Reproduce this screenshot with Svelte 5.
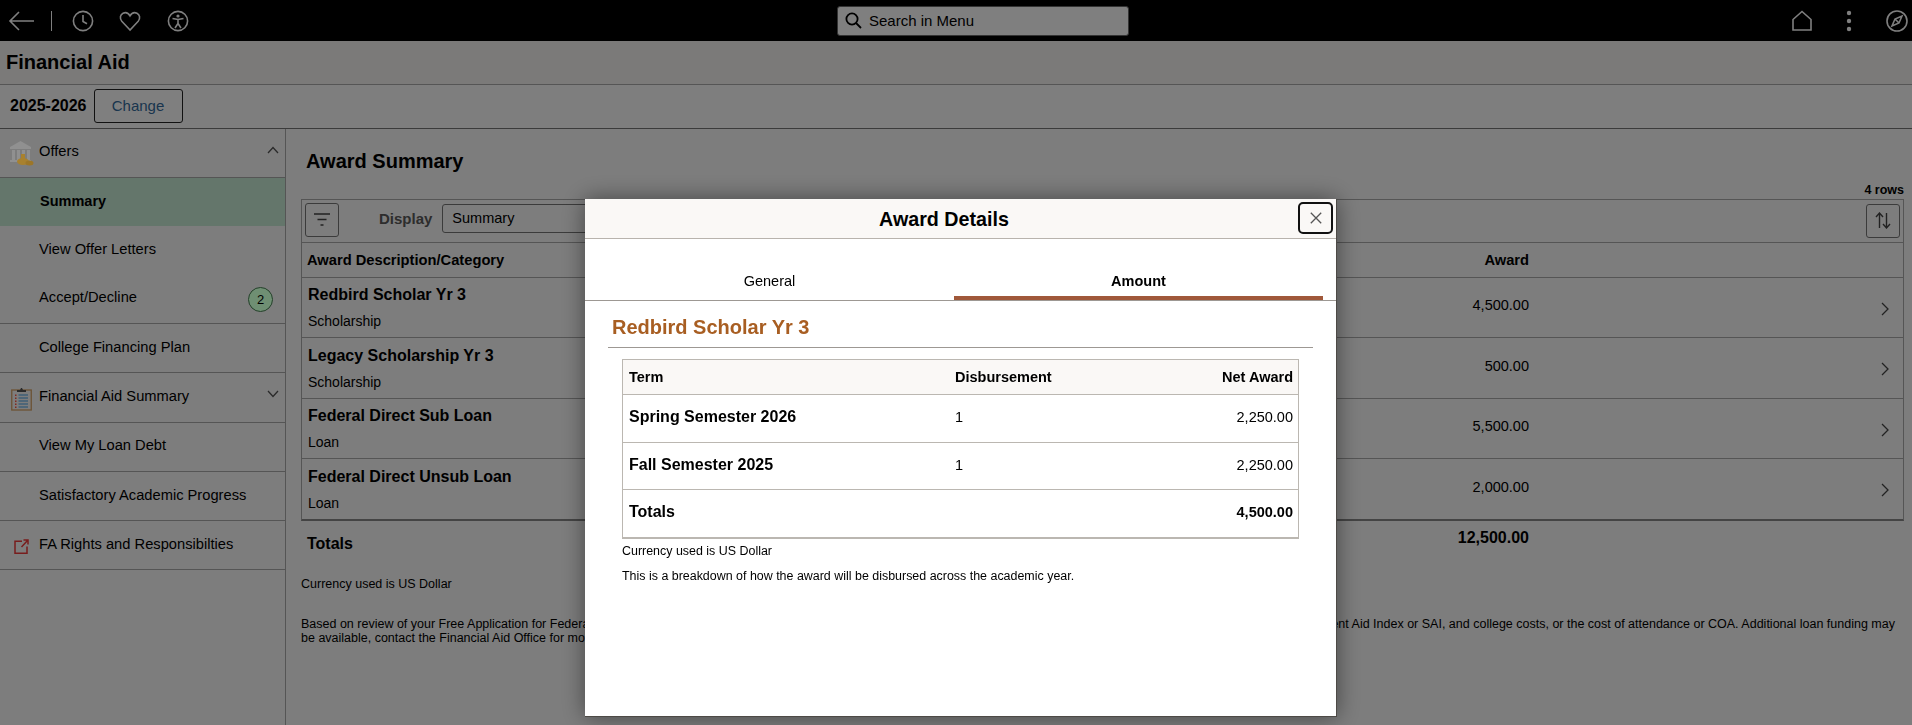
<script>
const navRows = [
  { label: 'Offers', icon: 'bank', chevron: 'up', h: 49, pb: 4, line: true },
  { label: 'Summary', active: true, h: 48, pb: 2, line: false },
  { label: 'View Offer Letters', h: 49, pb: 4, line: false },
  { label: 'Accept/Decline', badge: 2, h: 49, pb: 4, line: true },
  { label: 'College Financing Plan', h: 49, pb: 2, line: true },
  { label: 'Financial Aid Summary', icon: 'clipboard', chevron: 'down', h: 50, pb: 4, line: true },
  { label: 'View My Loan Debt', h: 49, pb: 4, line: true },
  { label: 'Satisfactory Academic Progress', h: 49, pb: 2, line: true },
  { label: 'FA Rights and Responsibilties', icon: 'external', h: 49, pb: 2, line: true }
]

const awards = [
  { name: 'Redbird Scholar Yr 3', category: 'Scholarship', amount: '4,500.00', h: 60 },
  { name: 'Legacy Scholarship Yr 3', category: 'Scholarship', amount: '500.00', h: 61 },
  { name: 'Federal Direct Sub Loan', category: 'Loan', amount: '5,500.00', h: 60 },
  { name: 'Federal Direct Unsub Loan', category: 'Loan', amount: '2,000.00', h: 60 }
]

const terms = [
  { term: 'Spring Semester 2026', disb: '1', net: '2,250.00', h: 48 },
  { term: 'Fall Semester 2025', disb: '1', net: '2,250.00', h: 47 }
]
</script>

<div class='page'>
  <header class='topbar'>
    <div class='top-left'>
      <svg class='back' width='27' height='22' viewBox='0 0 27 22'><path d='M26 11H2M11 2l-9 9 9 9' /></svg>
      <span class='sep'></span>
      <svg class='ti clock' width='22' height='22' viewBox='0 0 22 22'><circle cx='11' cy='11' r='9.6' /><path d='M11 5v6.5l4 2.2' /></svg>
      <svg class='ti heart' width='22' height='22' viewBox='0 0 22 22'><path d='M11 20 2.8 11.2C.4 8.4 1.2 4.6 4 3.2c2.6-1.2 5.4-.2 7 2.6 1.6-2.8 4.4-3.8 7-2.6 2.8 1.4 3.6 5.2 1.2 8z' /></svg>
      <svg class='ti access' width='22' height='22' viewBox='0 0 22 22'><circle cx='11' cy='11' r='9.6' /><circle class='dot' cx='11' cy='6' r='1.6' /><path d='M5.5 8.5 11 9.5l5.5-1M11 9.5v4M11 13.5 8 18M11 13.5 14 18' /></svg>
    </div>
    <div class='search'>
      <svg width='17' height='17' viewBox='0 0 17 17'><circle cx='7' cy='7' r='5.6' /><path d='m11 11 5 5' /></svg>
      <span>Search in Menu</span>
    </div>
    <div class='top-right'>
      <svg class='ti home' width='22' height='22' viewBox='0 0 22 22'><path d='M2 20V9.5L11 1.5l9 8V20z' /></svg>
      <svg class='dots' width='6' height='22' viewBox='0 0 6 22'><circle cx='3' cy='3' r='2.2' /><circle cx='3' cy='11' r='2.2' /><circle cx='3' cy='19' r='2.2' /></svg>
      <svg class='ti compass' width='22' height='22' viewBox='0 0 22 22'><circle cx='11' cy='11' r='10' /><path d='M16 6 13 13 6 16 9 9zM9 9l4 4' /></svg>
    </div>
  </header>

  <div class='titlebar'>Financial Aid</div>

  <div class='context'>
    <span class='year'>2025-2026</span>
    <button class='change'>Change</button>
  </div>

  <div class='content'>
    <aside class='side'>
      {#each navRows as row}
        <div class='nav' class:active={row.active} class:line={row.line} style='height:{row.h}px;padding-bottom:{row.pb}px'>
          {#if row.icon === 'bank'}
            <svg class='nav-icon bank' width='25' height='25' viewBox='0 0 25 25'>
              <path fill='#909090' d='M11.5 0 22 6v2H1V6z' />
              <path fill='#909090' d='M3 9h3v10H3zM8 9h3v10H8zM13 9h3v10h-3zM18 9h3v10h-3zM1 19h21v2H1z' />
              <ellipse cx='14' cy='20.5' rx='6' ry='3.5' fill='#a8812e' />
              <ellipse cx='20.5' cy='22' rx='4' ry='2.5' fill='#9c7628' />
              <rect x='12' y='13' width='4' height='5' fill='#a8812e' />
            </svg>
          {:else if row.icon === 'clipboard'}
            <svg class='nav-icon clip' width='21' height='24' viewBox='0 0 21 24'>
              <rect x='.75' y='3' width='19.5' height='20' fill='none' stroke='#d8a468' stroke-width='1.3' />
              <path fill='#555' d='M6 5V3h3l1-2h1l1 2h3v2z' />
              <path stroke='#3f9fe8' stroke-width='1.2' d='M7.5 8H17M7.5 11H17M7.5 14H17M7.5 17H17M7.5 20H17' />
              <path fill='#ff5440' d='M4 7.5h1.5V9H4zM4 10.5h1.5V12H4zM4 13.5h1.5V15H4zM4 16.5h1.5V18H4zM4 19.5h1.5V21H4z' />
            </svg>
          {:else if row.icon === 'external'}
            <svg class='nav-icon ext' width='15' height='15' viewBox='0 0 15 15'>
              <path d='M8 2.2H1v12h12V7.5M7.5 8 13.5 1.5M9.5 1H14v4.5' />
            </svg>
          {/if}
          <span>{row.label}</span>
          {#if row.chevron}
            <svg class='nav-chev' width='12' height='8' viewBox='0 0 12 8'>
              <path d={row.chevron === 'up' ? 'M1 7l5-5.5L11 7' : 'M1 1l5 5.5L11 1'} />
            </svg>
          {/if}
          {#if row.badge}
            <b class='badge'>{row.badge}</b>
          {/if}
        </div>
      {/each}
    </aside>

    <main class='main'>
      <h1>Award Summary</h1>
      <div class='rowcount'>4 rows</div>
      <div class='grid'>
        <div class='toolbar'>
          <button class='tool'>
            <svg width='16' height='14' viewBox='0 0 16 14'><path d='M0 1h16M3.5 6.5h9M6.5 12h3' /></svg>
          </button>
          <span class='display'>Display</span>
          <div class='select'>Summary</div>
          <button class='tool sort'>
            <svg width='16' height='17' viewBox='0 0 16 17'><path d='M4.5 16V1.5M1 5l3.5-4L8 5M11.5 1v14.5M8 12l3.5 4 3.5-4' /></svg>
          </button>
        </div>
        <div class='ghead'>
          <span>Award Description/Category</span>
          <span class='amt'>Award</span>
        </div>
        {#each awards as a}
          <div class='award' style='height:{a.h}px'>
            <div class='award-name'>
              <strong>{a.name}</strong>
              <small>{a.category}</small>
            </div>
            <span class='amt'>{a.amount}</span>
            <svg class='row-chev' width='8' height='14' viewBox='0 0 8 14'><path d='M1 1l6 6-6 6' /></svg>
          </div>
        {/each}
      </div>
      <div class='totals'>
        <strong>Totals</strong>
        <strong class='amt'>12,500.00</strong>
      </div>
      <p class='note currency'>Currency used is US Dollar</p>
      <p class='note'>Based on review of your Free Application for Federal Student Aid or FAFSA, your award total is based on your enrollment status, your full cost of education, your housing status, your Student Aid Index or SAI, and college costs, or the cost of attendance or COA. Additional loan funding may<br />be available, contact the Financial Aid Office for more information.</p>
    </main>
  </div>

  <div class='scrim'></div>

  <section class='modal'>
    <div class='modal-head'>
      <h2>Award Details</h2>
      <button class='close' aria-label='Close'>
        <svg width='12' height='12' viewBox='0 0 12 12'><path d='M.8.8l10.4 10.4M11.2.8.8 11.2' /></svg>
      </button>
    </div>
    <div class='tabs'>
      <div class='tab'>General</div>
      <div class='tab on'>Amount</div>
    </div>
    <h3>Redbird Scholar Yr 3</h3>
    <div class='terms'>
      <div class='trow thead'>
        <span>Term</span>
        <span>Disbursement</span>
        <span class='net'>Net Award</span>
      </div>
      {#each terms as t}
        <div class='trow' style='height:{t.h}px'>
          <strong>{t.term}</strong>
          <span>{t.disb}</span>
          <span class='net'>{t.net}</span>
        </div>
      {/each}
      <div class='trow last'>
        <strong>Totals</strong>
        <span></span>
        <strong class='net small'>4,500.00</strong>
      </div>
    </div>
    <p class='mnote'>Currency used is US Dollar</p>
    <p class='mnote'>This is a breakdown of how the award will be disbursed across the academic year.</p>
  </section>
</div>

<style>
  :global(body) {
    margin: 0;
    background: #fbfbfb;
    overflow: hidden;
  }
  .page {
    width: 1912px;
    height: 725px;
    overflow: hidden;
    font-family: 'Liberation Sans', Arial, sans-serif;
    color: #000;
    font-size: 14.5px;
  }
  button {
    font: inherit;
    background: none;
    padding: 0;
  }
  svg {
    flex: none;
  }

  /* top bar */
  .topbar {
    height: 41px;
    background: #000;
    display: grid;
    grid-template-columns: 837px 292px 1fr;
    align-items: center;
    box-sizing: border-box;
    padding-right: 4px;
  }
  .top-left, .top-right {
    display: flex;
    align-items: center;
  }
  .top-right {
    justify-content: flex-end;
  }
  .topbar svg path, .topbar svg circle {
    fill: none;
    stroke: #fff;
    stroke-width: 1.6;
  }
  .topbar .dots circle, .topbar .dot {
    fill: #fff;
    stroke: none;
  }
  .back { margin-left: 8px; }
  .sep {
    width: 1px;
    height: 20px;
    background: #fff;
    margin: 0 20px 0 16px;
  }
  .heart { margin-left: 25px; }
  .access { margin-left: 26px; }
  .dots { margin-left: 33px; }
  .compass { margin-left: 34px; }
  .search {
    height: 30px;
    background: #fff;
    border: 1px solid #666;
    border-radius: 3px;
    box-sizing: border-box;
    display: flex;
    align-items: center;
    gap: 7px;
    padding-left: 7px;
    font-size: 15px;
  }
  .topbar .search path, .topbar .search circle {
    stroke: #000;
    stroke-width: 1.8;
  }

  /* page heads */
  .titlebar {
    height: 33px;
    background: #f6f5f2;
    border-bottom: 1px solid #aaa;
    font-size: 20px;
    font-weight: 700;
    padding: 10px 0 0 6px;
  }
  .context {
    height: 41px;
    border-bottom: 1px solid #777;
    display: flex;
    align-items: center;
    gap: 7px;
    padding: 0 0 2px 10px;
    background: #fdfdfd;
  }
  .year {
    font-size: 16px;
    font-weight: 700;
  }
  .change {
    width: 89px;
    height: 34px;
    border: 1px solid #222;
    border-radius: 3px;
    color: #346b9c;
    font-size: 15px;
    background: #fff;
  }

  .content {
    display: flex;
    height: 596px;
  }

  /* left nav */
  .side {
    width: 285px;
    border-right: 1px solid #aaa;
    flex: none;
    font-size: 14.7px;
  }
  .nav {
    display: flex;
    align-items: center;
    box-sizing: border-box;
    padding-left: 39px;
    position: relative;
  }
  .nav.line {
    border-bottom: 1px solid #aaa;
  }
  .nav.active {
    background: #c9ecd6;
    font-weight: 700;
    font-size: 14.5px;
    padding-left: 40px;
  }
  .nav-icon {
    position: absolute;
  }
  .bank {
    left: 9px;
    top: 12px;
    z-index: 4;
  }
  .clip {
    left: 11px;
    top: 14px;
  }
  .ext {
    left: 14px;
    top: 18px;
  }
  .ext path {
    fill: none;
    stroke: #f03a3a;
    stroke-width: 1.5;
  }
  .nav-chev {
    position: absolute;
    right: 6px;
    top: 17px;
  }
  .nav-chev path {
    fill: none;
    stroke: #555;
    stroke-width: 1.3;
  }
  .badge {
    position: absolute;
    left: 248px;
    top: 12px;
    width: 25px;
    height: 25px;
    box-sizing: border-box;
    border-radius: 50%;
    background: #6f8f73;
    border: 1px solid #24402a;
    z-index: 4;
    display: flex;
    align-items: center;
    justify-content: center;
    font-size: 13px;
    font-weight: 400;
  }

  /* award list */
  .main {
    flex: 1;
    min-width: 0;
    padding: 0 8px 0 15px;
  }
  h1 {
    font-size: 20px;
    margin: 0;
    padding: 21px 0 0 5px;
    line-height: 23px;
  }
  .rowcount {
    text-align: right;
    font-size: 12.5px;
    font-weight: 700;
    line-height: 14px;
    margin-top: 10px;
  }
  .grid {
    border: 1px solid #aaa;
    border-bottom-width: 2px;
    margin-top: 2px;
    border-bottom-color: #888;
  }
  .toolbar {
    height: 43px;
    display: flex;
    align-items: center;
    border-bottom: 1px solid #aaa;
    padding: 0 3px 3px;
    box-sizing: border-box;
  }
  .tool {
    width: 34px;
    height: 34px;
    border: 1px solid #777;
    border-radius: 3px;
    display: flex;
    align-items: center;
    justify-content: center;
  }
  .tool path {
    fill: none;
    stroke: #444;
    stroke-width: 1.4;
  }
  .display {
    font-weight: 700;
    font-size: 15px;
    color: #5a5a5a;
    margin: 0 0 3px 40px;
  }
  .select {
    width: 400px;
    height: 29px;
    border: 1px solid #777;
    border-radius: 3px;
    margin: 0 0 3px 10px;
    display: flex;
    align-items: center;
    padding-left: 9px;
    box-sizing: border-box;
  }
  .sort {
    margin: 0 0 -2px auto;
  }
  .ghead {
    height: 35px;
    border-bottom: 1px solid #aaa;
    font-weight: 700;
    font-size: 14.7px;
    box-sizing: border-box;
    display: flex;
    align-items: center;
    justify-content: space-between;
    padding: 0 374px 0 5px;
  }
  .award {
    border-bottom: 1px solid #aaa;
    display: flex;
    align-items: center;
    box-sizing: border-box;
    padding: 0 14px 0 6px;
    position: relative;
  }
  .award:last-child {
    border-bottom: none;
  }
  .award-name {
    flex: 1;
    display: flex;
    flex-direction: column;
    gap: 9px;
  }
  .award-name strong {
    font-size: 16px;
    line-height: 18px;
  }
  .award-name small {
    font-size: 14px;
    line-height: 16px;
  }
  .amt {
    display: block;
  }
  .award .amt {
    margin: 0 352px 5px 0;
  }
  .row-chev {
    margin-top: 2px;
  }
  .row-chev path {
    fill: none;
    stroke: #444;
    stroke-width: 1.3;
  }
  .totals {
    display: flex;
    justify-content: space-between;
    padding: 14px 375px 0 6px;
    font-size: 16px;
    line-height: 18px;
  }
  .totals .amt {
    margin-top: -6px;
  }
  .note {
    font-size: 12.5px;
    line-height: 14px;
    margin: 0;
    white-space: nowrap;
    overflow: hidden;
  }
  .note.currency {
    margin: 24px 0 26px;
  }

  .scrim {
    position: fixed;
    inset: 0;
    background: rgba(0, 0, 0, 0.5);
    z-index: 2;
  }

  /* award details modal */
  .modal {
    position: fixed;
    left: 585px;
    top: 199px;
    width: 752px;
    height: 518px;
    box-sizing: border-box;
    background: #fff;
    border-right: 1px solid #4d4a46;
    border-bottom: 1px solid #4d4a46;
    box-shadow: 0 0 22px rgba(0, 0, 0, 0.45);
    z-index: 3;
  }
  .modal-head {
    height: 40px;
    background: #faf8f6;
    border-bottom: 1px solid #b8b3ad;
    box-sizing: border-box;
    display: flex;
    align-items: center;
    justify-content: center;
    padding: 1px 33px 0 0;
    position: relative;
  }
  h2 {
    font-size: 19.7px;
    margin: 0;
  }
  .close {
    position: absolute;
    right: 3px;
    top: 3px;
    width: 35px;
    height: 32px;
    border: 2px solid #111;
    border-radius: 5px;
    box-sizing: border-box;
    display: flex;
    align-items: center;
    justify-content: center;
  }
  .close path {
    stroke: #555;
    stroke-width: 1.3;
    fill: none;
  }
  .tabs {
    height: 62px;
    border-bottom: 1px solid #9d9893;
    box-sizing: border-box;
    display: grid;
    grid-template-columns: 369px 369px;
  }
  .tab {
    display: flex;
    align-items: flex-end;
    justify-content: center;
    padding-bottom: 11px;
    box-sizing: border-box;
  }
  .tab.on {
    font-weight: 700;
    border-bottom: 4px solid #a0583a;
    padding-bottom: 7px;
  }
  h3 {
    color: #a85e22;
    font-size: 20px;
    line-height: 23px;
    margin: 0 23px 0 23px;
    padding: 15px 0 8px 4px;
    border-bottom: 1px solid #9d9893;
  }
  .terms {
    margin: 11px 37px 0 37px;
    border: 1px solid #bbb7b1;
    border-bottom-width: 2px;
  }
  .trow {
    display: grid;
    grid-template-columns: 326px 1fr 120px;
    align-items: center;
    padding: 0 5px 3px 6px;
    height: 47px;
    box-sizing: border-box;
    border-bottom: 1px solid #bbb7b1;
  }
  .trow strong {
    font-size: 16px;
  }
  .thead {
    height: 35px;
    background: #faf8f6;
    font-weight: 700;
    padding-bottom: 0;
  }
  .trow.last {
    border-bottom: none;
  }
  .trow strong.small {
    font-size: 14.5px;
  }
  .net {
    text-align: right;
  }
  .mnote {
    font-size: 12.45px;
    line-height: 15px;
    margin: 5px 0 10px 37px;
  }
</style>
